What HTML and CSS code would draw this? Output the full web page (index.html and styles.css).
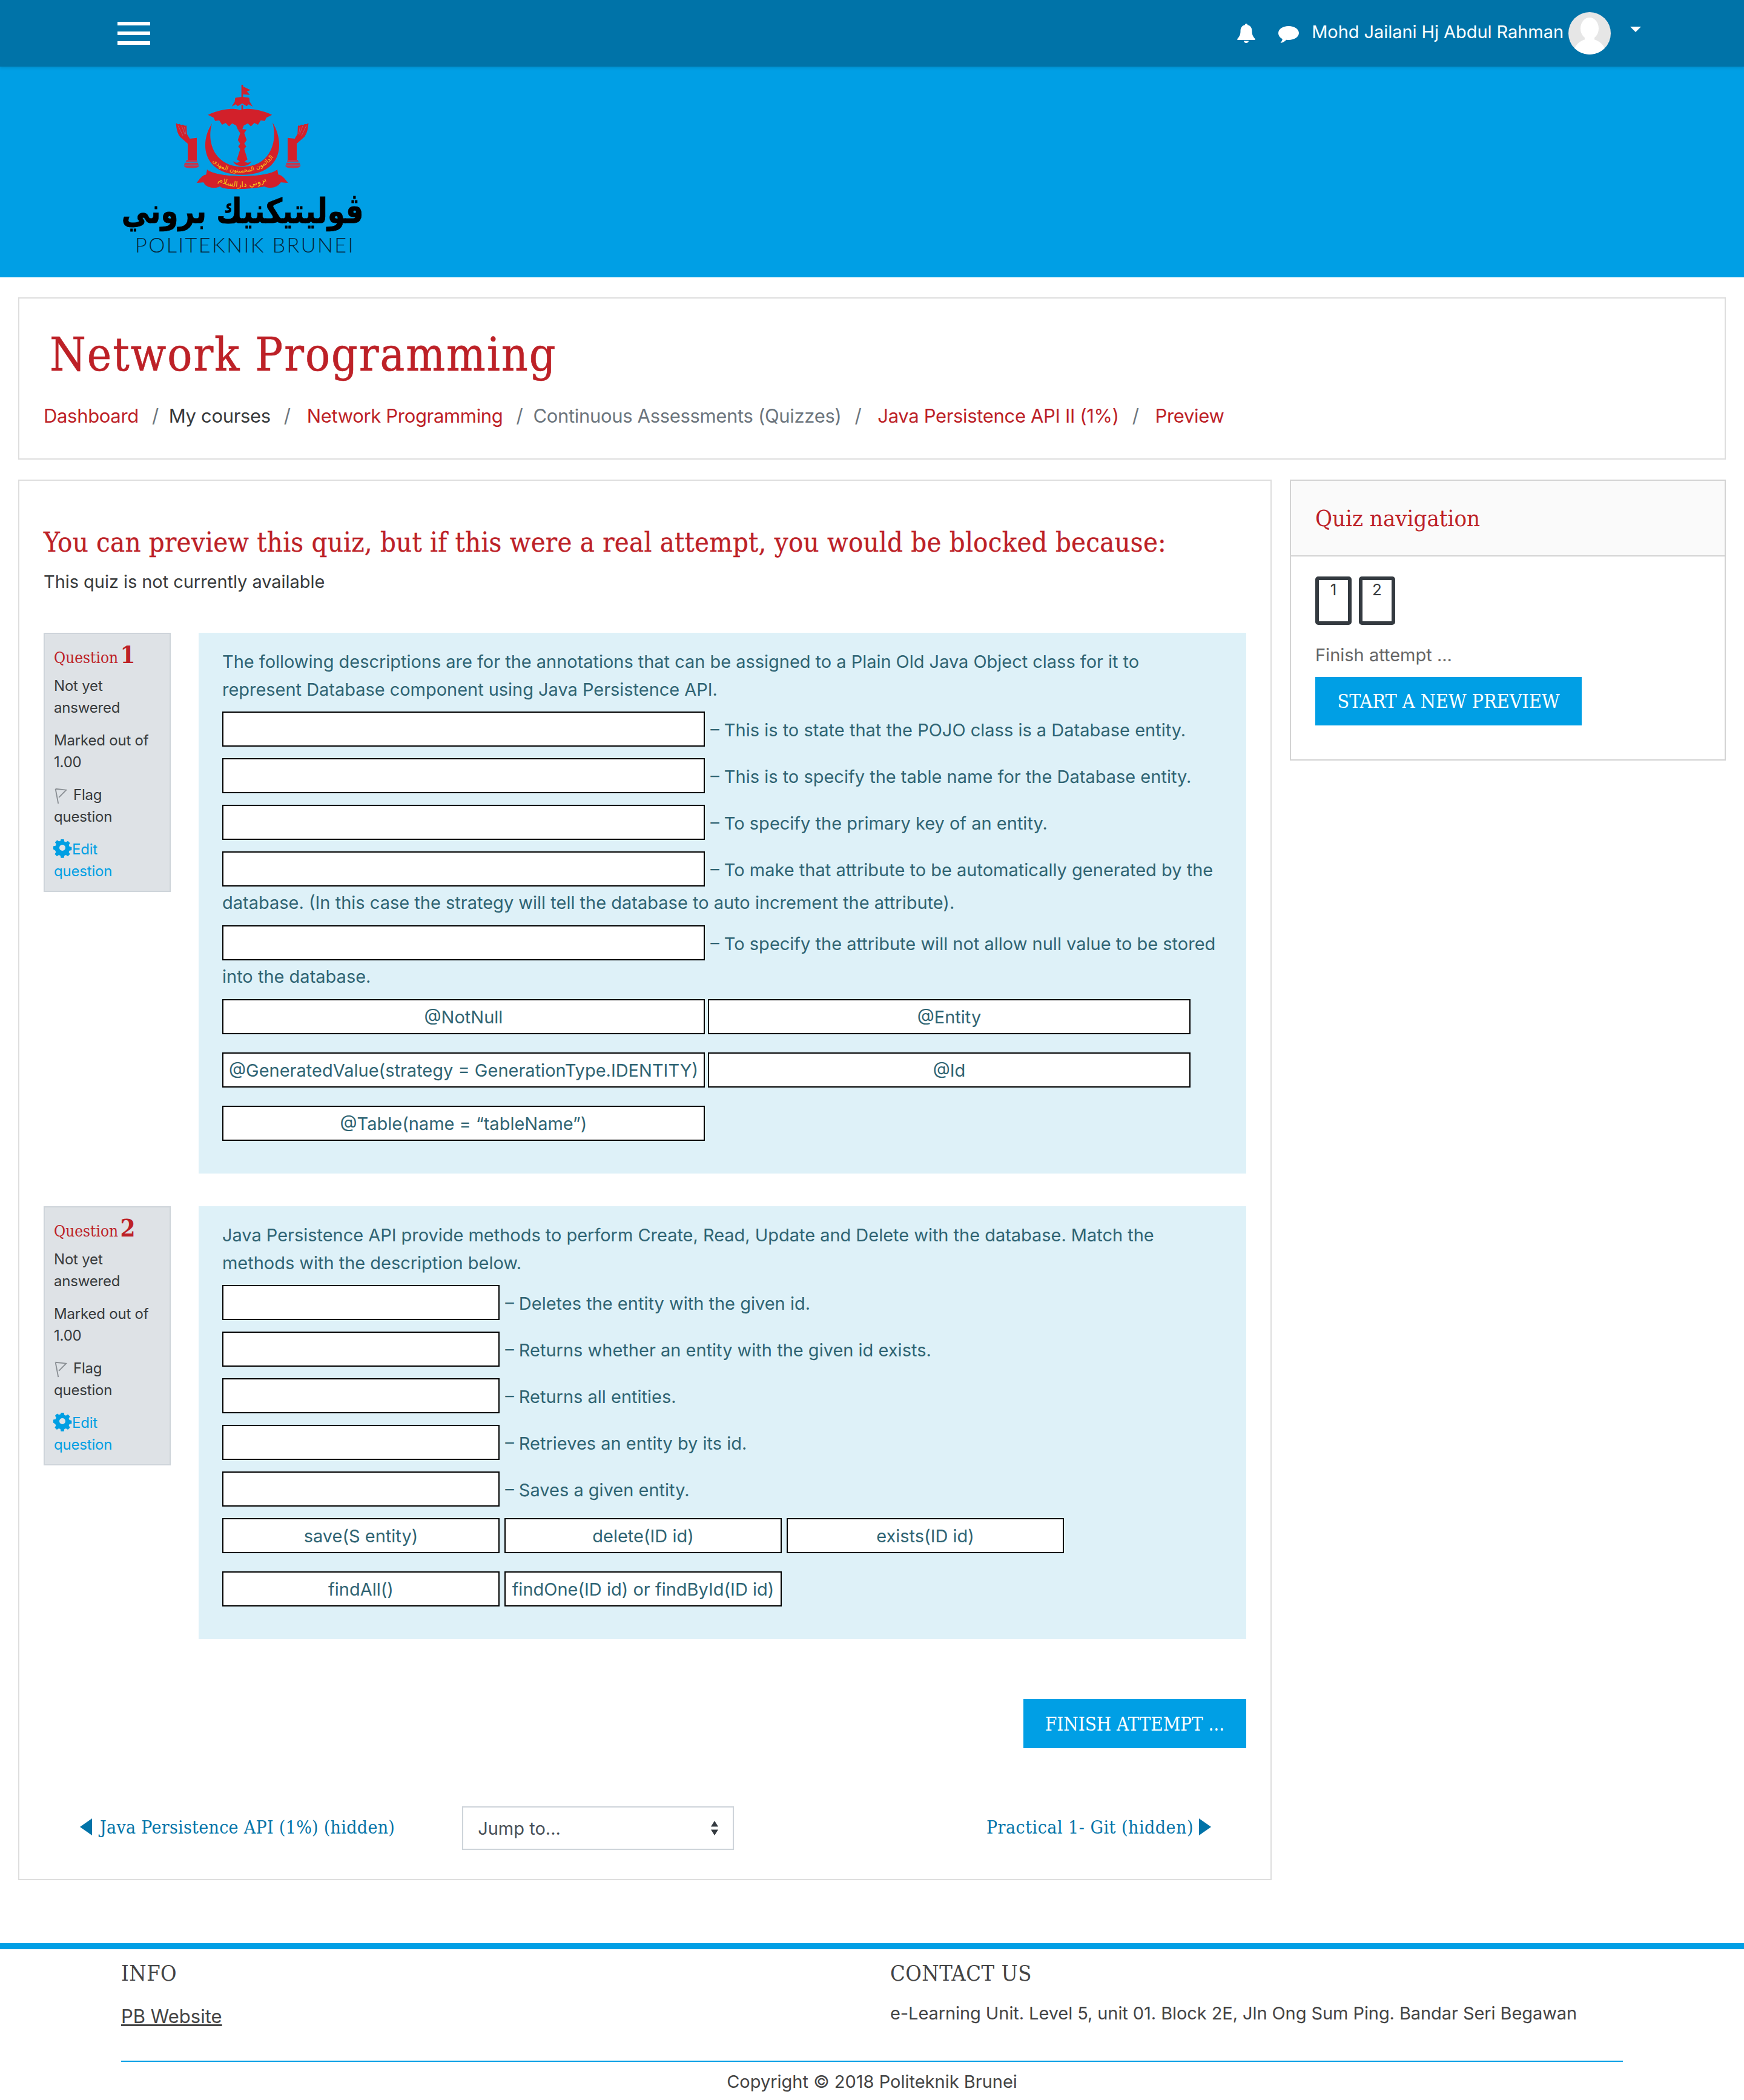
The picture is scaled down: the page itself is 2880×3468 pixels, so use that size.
FILE: index.html
```html
<!DOCTYPE html>
<html lang="en">
<head>
<meta charset="utf-8">
<title>Network Programming</title>
<link rel="stylesheet" href="styles.css">
</head>
<body>
<header class="topbar">
  <div class="burger"><span></span><span></span><span></span></div>
  <div class="usernav">
    <svg class="bell" viewBox="0 0 30 32"><path d="M15 0c1.300 0 2.200 1 2.200 2.200 5 1 7.300 5 7.300 10 0 6 1.500 9 5.500 13.300 0 .8-.5 1.500-1.500 1.500H1.500C.5 27 0 26.300 0 25.500 4 21.200 5.500 18.200 5.500 12.200c0-5 2.300-9 7.300-10C12.800 1 13.700 0 15 0zM11 28.500h8c0 2-1.800 3.500-4 3.500s-4-1.500-4-3.500z" fill="#fff"/></svg>
    <svg class="bubble" viewBox="0 0 34 28"><path d="M17 0c9.400 0 17 5 17 11.500S26.400 23 17 23c-1.300 0-2.600-.1-3.800-.3C11 25 8 27.300 3.500 28c1.500-1.700 3-4 3.300-6.700C2.700 19.300 0 15.700 0 11.500 0 5 7.600 0 17 0z" fill="#fff"/></svg>
    <span class="username">Mohd Jailani Hj Abdul Rahman</span>
    <svg class="avatar" viewBox="0 0 70 70"><defs><clipPath id="avclip"><circle cx="35" cy="35" r="35"/></clipPath></defs><circle cx="35" cy="35" r="35" fill="#e6e6e6"/><g clip-path="url(#avclip)" fill="#fff"><ellipse cx="35" cy="27" rx="15" ry="18"/><rect x="27" y="36" width="16" height="16"/><ellipse cx="35" cy="72" rx="28" ry="28"/></g></svg>
    <svg class="caret" viewBox="0 0 18 9"><path d="M0 0h18L9 9z" fill="#fff"/></svg>
  </div>
</header>

<div class="banner">
  <svg class="logo" viewBox="0 0 1380 960" width="460" height="320">
    <defs>
      <g id="hand">
        <path d="M362 250l10 6 8-2 8 6 8-3 10 6 8-1 2 42 14 23 35-4v109h-45v-80l-38-34c-14-18-19-45-20-68z" fill="#d2202a"/>
        <path d="M372 262l24 50M390 264l16 42M404 270l6 34" stroke="#b35a73" stroke-width="3" fill="none"/>
        <path d="M415 432h50l3 10H410zM406 446h64l4 10H402zM401 460h75c1 8-10 13-37 13s-38-5-38-13z" fill="#c9334a"/>
      </g>
      <path id="crescentArc" d="M522 405C565 520 790 535 868 385"/>
      <path id="ribbonArc" d="M525 500C590 590 790 590 855 495"/>
    </defs>
    <g fill="#d2202a">
      <rect x="686" y="60" width="8" height="70"/>
      <path d="M694 68l37 18-18 7 15 17-34-3z"/>
      <path d="M655 125c20-6 50-6 70 0l2 18 15 25-20-11-10 9-22-14-22 14-10-9-20 11 15-25z"/>
      <rect x="686" y="160" width="8" height="30"/>
      <path d="M690 192c-30-22-100-14-170 17l28 14 8 16 20-3 14 22 18-9 17 17 15-15 20 11 8 19 22 0 8-19 20-11 15 15 17-17 18 9 14-22 20 3 8-16 28-14c-70-31-140-39-170-17z"/>
      <path d="M690 280l-22 2 12 18-12 34 12 18-10 14 10 12-16 52 26 18 26-18-16-52 10-12-10-14 12-18-12-34 12-18z"/>
      <path d="M644 438c15 14 32 12 46-18 14 30 31 32 46 18-8 20-28 24-46 24s-38-4-46-24z"/>
      <path d="M540 252C478 345 490 506 690 506S902 345 840 247C868 345 826 466 690 466S512 345 540 252z"/>
      <path class="ribbon" d="M515 478c50 44 300 44 350 0l5 26c15 0 36 24 49 44l-38-3c-20 32-66 30-81 20-20 8-200 26-220 0-20 13-70 9-82-20l-36 3c13-20 33-44 48-44z"/>
    </g>
    <use href="#hand"/>
    <use href="#hand" transform="translate(1380 0) scale(-1 1)"/>
    <text class="logo-script"><textPath href="#crescentArc" startOffset="50%" text-anchor="middle">الدائمون المحسنون المهدى</textPath></text>
    <text class="logo-script wide-script"><textPath href="#ribbonArc" startOffset="50%" text-anchor="middle">بروني دارالسلام</textPath></text>
    <text class="logo-jawi" text-anchor="middle" direction="rtl" transform="translate(692 745) scale(1 1.2)">ڤوليتيكنيك بروني</text>
    <text class="logo-latin" x="703" y="891" text-anchor="middle">POLITEKNIK BRUNEI</text>
  </svg>
</div>

<div class="page">
  <section class="card page-head">
    <h1>Network Programming</h1>
    <nav class="crumbs">
      <a class="red" href="#">Dashboard</a><span class="sep">/</span>
      <span class="dark">My courses</span><span class="sep">/</span>
      <a class="red" href="#">Network Programming</a><span class="sep">/</span>
      <span class="grey">Continuous Assessments (Quizzes)</span><span class="sep">/</span>
      <a class="red" href="#">Java Persistence API II (1%)</a><span class="sep">/</span>
      <a class="red" href="#">Preview</a>
    </nav>
  </section>

  <div class="columns">
    <main class="card quiz">
      <h2>You can preview this quiz, but if this were a real attempt, you would be blocked because:</h2>
      <p class="notice">This quiz is not currently available</p>

      <article class="question">
        <aside class="qinfo">
          <h3>Question <b>1</b></h3>
          <p>Not yet answered</p>
          <p>Marked out of 1.00</p>
          <p><svg class="flag" viewBox="0 0 22 30"><path d="M2 3l19 2-13 13M2 3l5 26" fill="none" stroke="#8a8f94" stroke-width="2"/></svg>Flag question</p>
          <p class="edit"><svg class="gear" viewBox="0 0 28 28"><use href="#gearshape"/></svg>Edit<br>question</p>
        </aside>
        <div class="qbody">
          <p class="lead">The following descriptions are for the annotations that can be assigned to a Plain Old Java Object class for it to represent Database component using Java Persistence API.</p>
          <div class="row"><span class="blank wide"></span> – This is to state that the POJO class is a Database entity.</div>
          <div class="row"><span class="blank wide"></span> – This is to specify the table name for the Database entity.</div>
          <div class="row"><span class="blank wide"></span> – To specify the primary key of an entity.</div>
          <div class="row tight"><span class="blank wide"></span> – To make that attribute to be automatically generated by the database. (In this case the strategy will tell the database to auto increment the attribute).</div>
          <div class="row tight"><span class="blank wide"></span> – To specify the attribute will not allow null value to be stored into the database.</div>
          <div class="choices">
            <span class="choice wide">@NotNull</span>
            <span class="choice wide">@Entity</span>
            <span class="choice wide">@GeneratedValue(strategy = GenerationType.IDENTITY)</span>
            <span class="choice wide">@Id</span>
            <span class="choice wide">@Table(name = “tableName”)</span>
          </div>
        </div>
      </article>

      <article class="question">
        <aside class="qinfo">
          <h3>Question <b>2</b></h3>
          <p>Not yet answered</p>
          <p>Marked out of 1.00</p>
          <p><svg class="flag" viewBox="0 0 22 30"><path d="M2 3l19 2-13 13M2 3l5 26" fill="none" stroke="#8a8f94" stroke-width="2"/></svg>Flag question</p>
          <p class="edit"><svg class="gear" viewBox="0 0 28 28"><use href="#gearshape"/></svg>Edit<br>question</p>
        </aside>
        <div class="qbody">
          <p class="lead">Java Persistence API provide methods to perform Create, Read, Update and Delete with the database. Match the methods with the description below.</p>
          <div class="row"><span class="blank narrow"></span> – Deletes the entity with the given id.</div>
          <div class="row"><span class="blank narrow"></span> – Returns whether an entity with the given id exists.</div>
          <div class="row"><span class="blank narrow"></span> – Returns all entities.</div>
          <div class="row"><span class="blank narrow"></span> – Retrieves an entity by its id.</div>
          <div class="row"><span class="blank narrow"></span> – Saves a given entity.</div>
          <div class="choices three">
            <span class="choice narrow">save(S entity)</span>
            <span class="choice narrow">delete(ID id)</span>
            <span class="choice narrow">exists(ID id)</span>
            <span class="choice narrow">findAll()</span>
            <span class="choice narrow">findOne(ID id) or findById(ID id)</span>
          </div>
        </div>
      </article>

      <div class="finish-row"><a class="btn finish" href="#">FINISH ATTEMPT ...</a></div>

      <nav class="activity">
        <a class="prev" href="#"><svg class="tri" viewBox="0 0 20 28"><path d="M20 0v28L0 14z"/></svg>Java Persistence API (1%) (hidden)</a>
        <div class="jump">
          <select class="jump-select"><option>Jump to...</option></select>
          <svg class="updown" viewBox="0 0 16 28"><path d="M8 0l7 11H1zM8 28L1 17h14z" fill="#343a40"/></svg>
        </div>
        <a class="next" href="#">Practical 1- Git (hidden)<svg class="tri" viewBox="0 0 20 28"><path d="M0 0v28l20-14z"/></svg></a>
      </nav>
    </main>

    <aside class="block">
      <h4 class="block-head">Quiz navigation</h4>
      <div class="block-body">
        <div class="qnav"><span class="qbtn">1</span><span class="qbtn">2</span></div>
        <p class="finish-link">Finish attempt ...</p>
        <a class="btn preview" href="#">START A NEW PREVIEW</a>
      </div>
    </aside>
  </div>
</div>

<footer class="footer">
  <div class="foot-cols">
    <div class="foot-info">
      <h5>INFO</h5>
      <a href="#">PB Website</a>
    </div>
    <div class="foot-contact">
      <h5>CONTACT US</h5>
      <p>e-Learning Unit. Level 5, unit 01. Block 2E, Jln Ong Sum Ping. Bandar Seri Begawan</p>
    </div>
  </div>
  <div class="copyright">Copyright © 2018 Politeknik Brunei</div>
</footer>

<svg class="defs-holder" width="0" height="0"><defs>
  <path id="gearshape" fill="#009fe3" fill-rule="evenodd" d="M11.500 0h5l.8 3.700 2.600 1.100 3.200-2 3.500 3.500-2 3.200 1.100 2.600 3.700.8v5l-3.700.8-1.100 2.600 2 3.200-3.500 3.500-3.200-2-2.600 1.100-.8 3.700h-5l-.8-3.700-2.600-1.100-3.200 2-3.500-3.500 2-3.200-1.100-2.600L-1 16.500v-5l3.700-.8 1.100-2.600-2-3.200 3.500-3.500 3.200 2 2.600-1.100zM14 9a5 5 0 1 0 0 10 5 5 0 0 0 0-10z"/>
</defs></svg>
</body>
</html>
```

FILE: styles.css
```css
* { box-sizing: border-box; }
html, body { margin: 0; padding: 0; }
body {
  background: #fff;
  color: #373a3c;
  font-family: Inter, "Noto Sans", sans-serif;
  font-size: 29px;
}
a { text-decoration: none; }
h1, h2, h3, h4, h5, p { margin: 0; font-weight: 400; }
.defs-holder { display: block; height: 0; }

/* top bar */
.topbar {
  height: 110px;
  background: #0073a8;
  display: flex;
  align-items: center;
  justify-content: space-between;
  padding: 0 170px 0 194px;
  position: relative;
  box-shadow: 0 2px 5px rgba(0, 0, 0, .12);
}
.burger { display: flex; flex-direction: column; gap: 10px; width: 54px; }
.burger span { display: block; height: 6px; background: #fff; }
.usernav { display: flex; align-items: center; color: #fff; }
.bell { width: 30px; height: 32px; margin-right: 38px; }
.bubble { width: 34px; height: 28px; margin: 4px 21px 0 0; }
.username { margin-right: 8px; font-size: 29px; letter-spacing: -.06px; position: relative; top: -3px; }
.avatar { width: 70px; height: 70px; }
.caret { width: 18px; height: 9px; margin: -14px 0 0 32px; }

/* banner */
.banner { height: 348px; background: #009fe5; padding: 10px 0 0 170px; }
.logo { display: block; }
.ribbon { stroke: #009fe5; stroke-width: 3; }
.logo-script { font-family: "DejaVu Sans", sans-serif; font-size: 30px; fill: #f9c21a; }
.wide-script { font-size: 38px; }
.logo-jawi { font-family: "DejaVu Sans", sans-serif; font-weight: 700; font-size: 140px; fill: #000; stroke: #000; stroke-width: 2px; }
.logo-latin { font-family: Lato, sans-serif; font-weight: 300; font-size: 103px; fill: #06263a; letter-spacing: 7px; }

/* page */
.page { padding: 33px 30px 0; }
.card { background: #fff; border: 2px solid #dedede; }
.page-head { height: 268px; padding: 49px 40px 0; }
h1, h2, h3, h4, h5, .btn, .activity a {
  font-family: "DejaVu Serif Condensed", "DejaVu Serif", serif;
}
h1 { color: #bd2127; font-size: 76px; letter-spacing: 2px; line-height: 88px; margin-left: 10px; -webkit-text-stroke: .6px #bd2127; }
.crumbs { display: flex; align-items: center; margin-top: 33px; font-size: 31px; letter-spacing: -.33px; line-height: 48px; }
.sep { color: #6c757d; margin: 0 17px 0 22px; }
.sep + .red { margin-left: 10px; }
.red { color: #bd2127; }
.dark { color: #373a3c; }
.grey { color: #6c757d; }

.columns { display: grid; grid-template-columns: 2070px 720px; gap: 30px; margin-top: 33px; align-items: start; }

.quiz { height: 2313px; padding: 69px 40px 0; }
h2 { color: #bd2127; font-size: 45px; letter-spacing: .25px; line-height: 66px; -webkit-text-stroke: .3px #bd2127; }
.notice { line-height: 44px; margin-top: 10px; font-size: 29px; letter-spacing: -.05px; }

.question { display: flex; align-items: flex-start; gap: 46px; margin-top: 54px; }
.notice + .question { margin-top: 62px; }
.qinfo {
  width: 210px;
  flex: none;
  background: #dee2e6;
  border: 2px solid #ced4da;
  padding: 14px 15px 14px;
  font-size: 24px;
  line-height: 36px;
  letter-spacing: -.2px;
}
.qinfo h3 { color: #bd2127; font-size: 26px; letter-spacing: 0; line-height: 40px; margin-bottom: 9px; }
.qinfo h3 b { font-size: 40px; font-weight: 700; margin-left: -4px; }
.qinfo p { margin-bottom: 18px; }
.qinfo p:last-child { margin-bottom: 0; }
.flag { width: 22px; height: 28px; margin-right: 10px; vertical-align: -7px; }
.edit { color: #009fe3; }
.gear { width: 28px; height: 28px; margin-right: 2px; vertical-align: -3px; overflow: visible; }

.qbody {
  width: 1730px;
  background: #def1f8;
  color: #2f6473;
  padding: 25px 39px 54px;
}
.lead { line-height: 46px; margin-bottom: 13px; letter-spacing: -.03px; }
.row { line-height: 50px; margin-bottom: 19px; }
.row.tight { line-height: 54px; margin-bottom: 10px; }
.blank {
  display: inline-block;
  height: 58px;
  background: #fff;
  border: 2px solid #000;
  vertical-align: -17px;
  margin-right: 1px;
}
.wide { width: 797px; }
.narrow { width: 458px; }
.choices { display: flex; flex-wrap: wrap; gap: 30px 5px; }
.choices.three { gap: 30px 8px; }
.choice {
  height: 58px;
  background: #fff;
  border: 2px solid #000;
  display: flex;
  align-items: center;
  justify-content: center;
  white-space: nowrap;
}

.finish-row { display: flex; justify-content: flex-end; margin-top: 99px; }
.btn { display: inline-flex; align-items: center; justify-content: center; background: #009fe5; color: #fff; }
.finish { width: 368px; height: 81px; font-size: 31px; }

.activity { display: flex; align-items: center; margin-top: 96px; padding: 0 58px 0 60px; }
.activity a { color: #0073a8; font-size: 30px; display: flex; align-items: center; gap: 13px; padding-bottom: 4px; }
.activity .prev { letter-spacing: .3px; }
.activity .next { margin-left: auto; gap: 9px; letter-spacing: .5px; }
.tri { width: 20px; height: 28px; fill: #0073a8; }
.jump { position: relative; width: 449px; height: 72px; margin-left: 111px; }
.jump-select {
  appearance: none;
  -webkit-appearance: none;
  width: 100%;
  height: 100%;
  background: #fff;
  border: 2px solid #ced4da;
  border-radius: 0;
  color: #495057;
  font: inherit;
  padding: 0 24px;
}
.updown { position: absolute; right: 24px; top: 24px; width: 16px; height: 24px; }

/* aside block */
.block { border: 2px solid #d3d3d3; height: 464px; background: #fff; }
.block-head {
  height: 125px;
  background: #fafafa;
  border-bottom: 2px solid #d3d3d3;
  padding: 38px 40px 0;
  color: #bd2127;
  font-size: 38px;
  line-height: 48px;
}
.block-body { padding: 33px 40px 0; }
.qnav { display: flex; gap: 12px; }
.qbtn {
  width: 60px;
  height: 80px;
  border: 6px solid #343a40;
  border-radius: 5px;
  text-align: center;
  font-size: 26px;
  line-height: 32px;
}
.finish-link { color: #666; line-height: 40px; margin-top: 30px; }
.preview { width: 440px; height: 80px; margin-top: 16px; font-size: 32px; }

/* footer */
.footer { margin-top: 104px; height: 257px; border-top: 10px solid #009fe5; padding: 0 200px; color: #444; }
.foot-cols { display: flex; height: 186px; border-bottom: 2px solid #009fe5; }
.foot-info { width: 1270px; }
h5 { font-size: 36px; letter-spacing: .5px; line-height: 48px; margin-top: 16px; color: #444; }
.foot-info a { display: inline-block; margin-top: 27px; color: #444; text-decoration: underline; font-size: 31px; line-height: 40px; }
.foot-contact p { margin-top: 22px; line-height: 40px; letter-spacing: -.08px; }
.copyright { text-align: center; line-height: 40px; margin-top: 13px; }
```
